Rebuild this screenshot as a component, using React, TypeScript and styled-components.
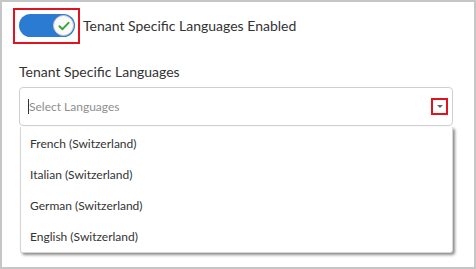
import React from "react";
import styled, { createGlobalStyle } from "styled-components";

const GlobalStyle = createGlobalStyle`
  html, body { margin: 0; padding: 0; background: #fff; }
  body { font-family: Lato, "Open Sans", Arial, sans-serif; color: #333; }
  * { box-sizing: border-box; }
`;

const Frame = styled.div`
  width: 476px;
  height: 269px;
  border: 2px solid #c6c6c6;
  padding: 6px 21px 0 11px;
  background: #fff;
`;

const ToggleRow = styled.div`
  display: flex;
  align-items: center;
  gap: 3px;
`;

const Highlight = styled.div`
  display: flex;
  border: 2px solid #e0141e;
  padding: 4px 3px 5px 4px;
`;

const Track = styled.div`
  position: relative;
  width: 56px;
  height: 23px;
  border-radius: 12px;
  background: #2b7bd3;
`;

const Knob = styled.div`
  position: absolute;
  right: 1px;
  top: 1px;
  width: 21px;
  height: 21px;
  border-radius: 50%;
  background: #fafafa;
  border: 1px solid #c8c8c8;
  display: flex;
  align-items: center;
  justify-content: center;
`;

const ToggleLabel = styled.span`
  font-size: 14px;
  color: #333;
  margin-top: -1px;
`;

const Field = styled.div`
  margin: 19px 0 0 6px;
  position: relative;
`;

const FieldLabel = styled.div`
  font-size: 14px;
  color: #333;
  line-height: 18px;
  margin-bottom: 6px;
`;

const SelectBox = styled.div`
  height: 39px;
  border: 1px solid #cfcfcf;
  border-radius: 4px;
  display: flex;
  align-items: center;
  padding: 0 4px 0 8px;
`;

const Placeholder = styled.span`
  flex: 1;
  font-size: 12px;
  color: #8e8e8e;
  border-left: 1px solid #333;
  line-height: 15px;
`;

const ArrowBox = styled.div`
  width: 17px;
  height: 17px;
  border: 2px solid #e0141e;
  display: flex;
  align-items: center;
  justify-content: center;
`;

const Caret = styled.div`
  width: 0;
  height: 0;
  border-left: 3px solid transparent;
  border-right: 3px solid transparent;
  border-top: 3px solid #666;
`;

const Menu = styled.ul`
  position: absolute;
  left: 1px;
  right: 0;
  top: 64px;
  margin: 0;
  padding: 1px 0 0;
  list-style: none;
  background: #fff;
  border: 1px solid #d6d6d6;
  border-top: none;
  border-radius: 0 0 3px 3px;
  box-shadow: 2px 2px 3px rgba(0, 0, 0, 0.45);
  height: 126px;
`;

const Item = styled.li`
  height: 31px;
  display: flex;
  align-items: center;
  padding-left: 9px;
  font-size: 12px;
  color: #333;
`;

const languages = [
  "French (Switzerland)",
  "Italian (Switzerland)",
  "German (Switzerland)",
  "English (Switzerland)",
];

export default function App() {
  return (
    <>
      <GlobalStyle />
      <Frame>
        <ToggleRow>
          <Highlight>
            <Track>
              <Knob>
                <svg width="12" height="10" viewBox="0 0 13 11">
                  <path d="M1.5 5.8 L4.8 9 L11.5 2" fill="none" stroke="#3aa33a" strokeWidth="2.2" strokeLinecap="round" strokeLinejoin="round" />
                </svg>
              </Knob>
            </Track>
          </Highlight>
          <ToggleLabel>Tenant Specific Languages Enabled</ToggleLabel>
        </ToggleRow>
        <Field>
          <FieldLabel>Tenant Specific Languages</FieldLabel>
          <SelectBox>
            <Placeholder>Select Languages</Placeholder>
            <ArrowBox>
              <Caret />
            </ArrowBox>
          </SelectBox>
          <Menu>
            {languages.map((l) => (
              <Item key={l}>{l}</Item>
            ))}
          </Menu>
        </Field>
      </Frame>
    </>
  );
}
